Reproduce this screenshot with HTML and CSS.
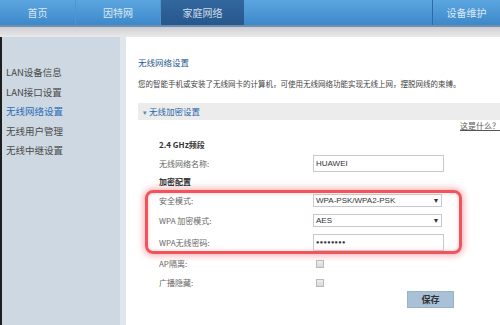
FILE: index.html
```html
<!DOCTYPE html>
<html lang="zh-CN">
<head>
<meta charset="UTF-8">
<title>家庭网络</title>
<link rel="stylesheet" href="styles.css">
</head>
<body>
<div class="nav">
  <div class="tab t1">首页</div>
  <div class="tab t2">因特网</div>
  <div class="tab t3 active">家庭网络</div>
  <div class="spacer"></div>
  <div class="tab t4">设备维护</div>
</div>
<div class="band"></div>
<div class="main">
  <div class="side">
    <div class="item">LAN设备信息</div>
    <div class="item">LAN接口设置</div>
    <div class="item current">无线网络设置</div>
    <div class="item">无线用户管理</div>
    <div class="item">无线中继设置</div>
  </div>
  <div class="content">
    <div class="title">无线网络设置</div>
    <div class="desc">您的智能手机或安装了无线网卡的计算机，可使用无线网络功能实现无线上网，摆脱网线的束缚。</div>
    <div class="section"><span class="arrow">▾</span> 无线加密设置</div>
    <div class="help"><a>这是什么？</a></div>
    <div class="form">
      <div class="sub">2.4 GHz频段</div>
      <div class="row r-name"><span class="lbl">无线网络名称:</span><div class="field">HUAWEI</div></div>
      <div class="sub sub2">加密配置</div>
      <div class="mark">
        <div class="row r-mode"><span class="lbl">安全模式:</span><div class="select">WPA-PSK/WPA2-PSK<span class="caret">▾</span></div></div>
        <div class="row r-enc"><span class="lbl">WPA 加密模式:</span><div class="select">AES<span class="caret">▾</span></div></div>
        <div class="row r-pass"><span class="lbl">WPA无线密码:</span><div class="field pass">●●●●●●●●</div></div>
      </div>
      <div class="row r-check"><span class="lbl">AP隔离:</span><span class="box"></span></div>
      <div class="row r-check"><span class="lbl">广播隐藏:</span><span class="box"></span></div>
      <div class="actions"><button>保存</button></div>
    </div>
  </div>
</div>
</body>
</html>
```

FILE: styles.css
```css
body {
    margin: 0;
    width: 500px;
    height: 325px;
    overflow: hidden;
    font-family: "Noto Sans CJK SC", "Liberation Sans", sans-serif;
    font-size: 8px;
    color: #555;
    background: #fff;
}
.nav {
    display: flex;
    height: 25px;
    background: linear-gradient(#5ba6e0, #3d88c9);
    border-bottom: 2px solid #6f8fae;
}
.tab {
    display: flex;
    align-items: center;
    justify-content: center;
    color: #dce9f6;
    font-size: 10px;
    border-right: 1px solid #4f93cf;
}
.t1 { width: 75px; }
.t2 { width: 84px; }
.t3 { width: 83px; }
.tab.active {
    background: linear-gradient(#33679f, #26578c);
    color: #cfdcea;
    border-right: none;
}
.spacer { flex: 1; }
.t4 {
    width: 67px;
    border-left: 1px solid #2f6aa6;
    border-right: none;
}
.band {
    height: 10px;
    background: linear-gradient(#cfcfd3, #e9e9eb);
}
.main {
    display: flex;
    height: 288px;
}
.side {
    flex-shrink: 0;
    width: 118px;
    background: #cdd8e2;
    border-left: 2px solid #1e1e1e;
    border-right: 6px solid #dfe6ec;
    padding-top: 26px;
}
.item {
    height: 19.5px;
    line-height: 19.5px;
    padding-left: 4px;
    font-size: 9.5px;
    color: #4b4b4b;
}
.item.current { color: #2b6cb5; }
.content {
    flex: 1;
    min-width: 0;
    padding: 17px 0 0 12px;
}
.title {
    height: 16px;
    line-height: 16px;
    font-size: 8.5px;
    color: #1f5a8c;
}
.desc {
    margin-top: 6px;
    height: 16px;
    line-height: 16px;
    font-size: 7.5px;
    color: #444;
    white-space: nowrap;
}
.section {
    margin-top: 11px;
    height: 17px;
    line-height: 17px;
    background: #ececec;
    color: #2a6aa6;
    font-size: 8.5px;
    padding-left: 5px;
}
.arrow {
    font-size: 7px;
    color: #5b86b4;
}
.help {
    text-align: right;
    height: 12px;
    line-height: 12px;
}
.help a {
    color: #555;
    text-decoration: underline;
    font-size: 8px;
}
.form {
    padding-left: 21px;
    width: 295px;
}
.sub {
    font-weight: bold;
    color: #333;
    font-size: 8px;
    height: 16px;
    line-height: 16px;
    margin-top: 5px;
}
.sub2 { margin-top: 2px; }
.row {
    display: flex;
    align-items: center;
    height: 19px;
}
.lbl {
    width: 154px;
    flex-shrink: 0;
    color: #666;
    font-size: 8px;
}
.field {
    box-sizing: border-box;
    width: 131px;
    height: 17px;
    line-height: 15px;
    border: 1px solid #c9c9c9;
    padding-left: 2px;
    color: #333;
    font-family: "Liberation Sans", sans-serif;
    font-size: 8px;
}
.pass {
    font-size: 5.5px;
    letter-spacing: 0.4px;
}
.r-name { height: 18px; margin-top: 1px; }
.select {
    box-sizing: border-box;
    width: 129px;
    height: 13px;
    line-height: 11px;
    border: 1px solid #c9c9c9;
    padding-left: 2px;
    color: #333;
    font-family: "Liberation Sans", sans-serif;
    font-size: 8px;
    display: flex;
    justify-content: space-between;
}
.caret {
    font-size: 8px;
    padding-right: 3px;
    color: #333;
}
.mark {
    box-sizing: border-box;
    width: 317px;
    margin-left: -14px;
    padding-left: 11px;
    border: 3px solid #f0555b;
    border-radius: 8px;
    box-shadow: 0 0 6px 2px rgba(240, 90, 100, 0.45), inset 0 0 4px rgba(240, 90, 100, 0.35);
}
.mark .r-mode { height: 15px; }
.mark .r-enc { height: 25px; }
.mark .r-pass { height: 18px; }
.box {
    width: 6px;
    height: 6px;
    border: 1px solid #b9b9b9;
    background: linear-gradient(#eee, #d8d8d8);
    margin-left: 3px;
}
.actions {
    display: flex;
    justify-content: flex-end;
    margin-top: -1px;
}
button {
    width: 47px;
    height: 17px;
    border: 1px solid #97b2c9;
    background: #a9c1d6;
    color: #333;
    font-family: "Noto Sans CJK SC", sans-serif;
    font-size: 9px;
    font-weight: bold;
    padding: 0;
}
```
